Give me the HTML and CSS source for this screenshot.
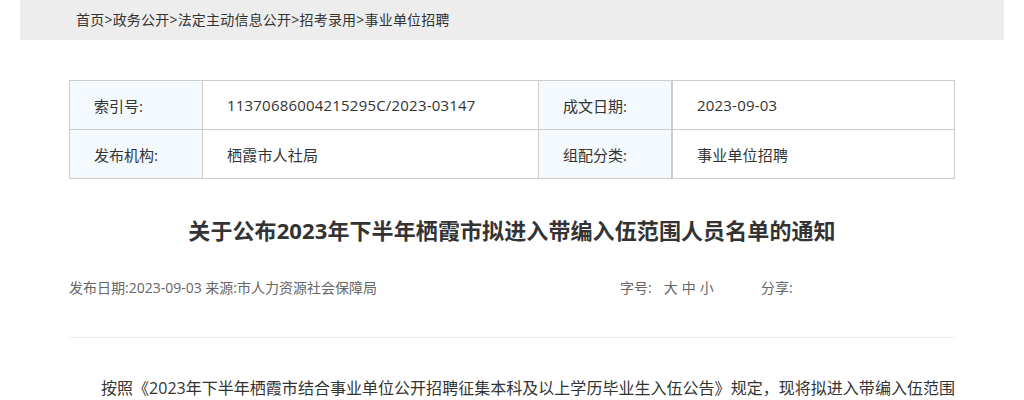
FILE: index.html
```html
<!DOCTYPE html>
<html lang="zh-CN">

<head>
    <meta charset="UTF-8">
    <meta name="viewport" content="width=device-width, initial-scale=1.0">
    <title>关于公布2023年下半年栖霞市拟进入带编入伍范围人员名单的通知</title>
    <link rel="stylesheet" href="styles.css">
</head>

<body>

    <!-- breadcrumb bar -->
    <div class="crumbs">
        <a href="#">首页</a>&gt;<a href="#">政务公开</a>&gt;<a href="#">法定主动信息公开</a>&gt;<a href="#">招考录用</a>&gt;<a href="#">事业单位招聘</a>
    </div>

    <div class="article">

        <table class="info">
            <tr>
                <th>索引号:</th>
                <td class="wide">11370686004215295C/2023-03147</td>
                <th class="split">成文日期:</th>
                <td>2023-09-03</td>
            </tr>
            <tr>
                <th>发布机构:</th>
                <td class="wide">栖霞市人社局</td>
                <th class="split">组配分类:</th>
                <td>事业单位招聘</td>
            </tr>
        </table>

        <h1 class="title">关于公布2023年下半年栖霞市拟进入带编入伍范围人员名单的通知</h1>

        <div class="meta">
            <span class="source">发布日期:2023-09-03 来源:市人力资源社会保障局</span>
            <span class="size">字号:<span class="sizes"><a href="#">大</a><a href="#">中</a><a href="#">小</a></span></span>
            <span class="share">分享:</span>
        </div>

        <div class="body">
            <p>按照《2023年下半年栖霞市结合事业单位公开招聘征集本科及以上学历毕业生入伍公告》规定，现将拟进入带编入伍范围人员名单予以公布。</p>
        </div>

    </div>

</body>

</html>
```

FILE: styles.css
```css
body {
    margin: 0;
    font-family: "Open Sans", "Noto Sans CJK SC", sans-serif;
    color: #333;
    background: #fff;
}

a {
    color: inherit;
    text-decoration: none;
}

.crumbs {
    margin: 0 20px;
    height: 40px;
    line-height: 40px;
    padding-left: 56px;
    background: #ededed;
    font-size: 14px;
    letter-spacing: 0.2px;
    color: #333;
}

.article {
    width: 886px;
    margin: 40px auto 0;
}

.info {
    width: 100%;
    border-collapse: collapse;
    font-size: 15px;
}

.info th,
.info td {
    height: 48px;
    border: 1px solid #ccc;
    text-align: left;
    font-weight: normal;
    padding: 0 0 0 24px;
}

.info td {
    letter-spacing: 0.2px;
}

.info th {
    width: 108px;
    background: #f3f9fd;
    color: #333;
}

.info td.wide {
    width: 311px;
}

.info th.split {
    border-right: 2px solid #ccc;
}

.title {
    margin: 33px 0 0;
    text-align: center;
    font-size: 22px;
    letter-spacing: 0.1px;
    line-height: 36px;
    font-weight: bold;
    color: #333;
}

.meta {
    display: flex;
    margin-top: 30px;
    font-size: 14px;
    line-height: 20px;
    color: #666;
    padding-bottom: 39px;
    border-bottom: 1px solid #eee;
}

.source {
    width: 551px;
}

.size {
    width: 141px;
}

.sizes {
    margin-left: 12px;
}

.sizes a {
    margin-right: 4px;
}

.body {
    padding-top: 36px;
    font-size: 16px;
    line-height: 28px;
}

.body p {
    margin: 0;
    text-indent: 2em;
    text-align: justify;
}
```
